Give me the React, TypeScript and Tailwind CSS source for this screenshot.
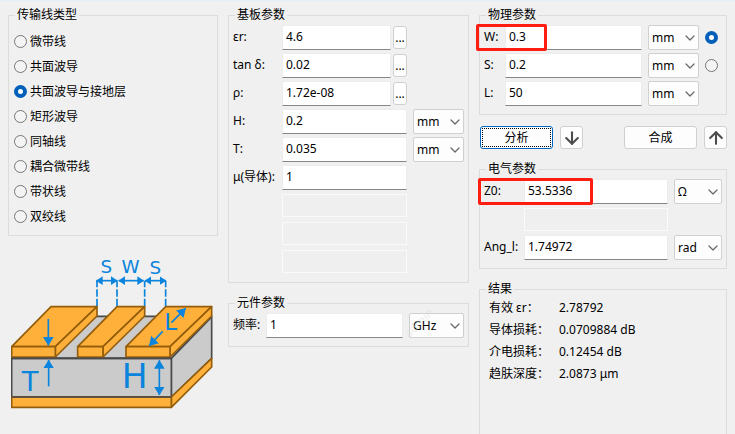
import { ReactNode, useState } from "react";
import { clsx } from "clsx";
import { ArrowDown, ArrowUp, ChevronDown } from "lucide-react";

const LINE_TYPES = [
  "微带线",
  "共面波导",
  "共面波导与接地层",
  "矩形波导",
  "同轴线",
  "耦合微带线",
  "带状线",
  "双绞线",
];

const RESULTS = [
  { label: "有效 εr：", value: "2.78792" },
  { label: "导体损耗：", value: "0.0709884 dB" },
  { label: "介电损耗：", value: "0.12454 dB" },
  { label: "趋肤深度：", value: "2.0873 μm" },
];

const LENGTH_UNITS = ["mm", "cm", "mil", "inch"];

type GroupProps = {
  title: string;
  className?: string;
  bodyClassName?: string;
  children: ReactNode;
};

const Group = ({ title, className, bodyClassName, children }: GroupProps) => (
  <fieldset className={clsx("min-w-0 border border-[#dcdcdc]", className)}>
    <legend className="ml-1.5 px-0.5 leading-4">{title}</legend>
    <div className={bodyClassName}>{children}</div>
  </fieldset>
);

type LabelProps = {
  htmlFor: string;
  children: ReactNode;
};

const Label = ({ htmlFor, children }: LabelProps) => (
  <label htmlFor={htmlFor} className="relative pb-0.5 whitespace-nowrap">
    {children}
  </label>
);

type FieldProps = {
  id: string;
  value?: string;
  disabled?: boolean;
};

const Field = ({ id, value, disabled }: FieldProps) => (
  <input
    id={id}
    type="text"
    defaultValue={value}
    disabled={disabled}
    aria-label={disabled ? "未使用" : undefined}
    className={clsx(
      "w-full min-w-0 border px-[3px] outline-none",
      disabled
        ? "h-[23px] border-[#fafafa] bg-[#efefef]"
        : "h-[25px] border-[#ececec] border-b-[#868686] bg-white pb-0.5"
    )}
  />
);

type UnitProps = {
  label: string;
  options: string[];
};

const Unit = ({ label, options }: UnitProps) => (
  <div className="relative">
    <select
      aria-label={label}
      className="block h-[25px] w-full appearance-none rounded-xs border border-[#d0d0d0] bg-[#fdfdfd] pl-[3px] outline-none"
    >
      {options.map((option) => (
        <option key={option}>{option}</option>
      ))}
    </select>
    <ChevronDown
      size={16}
      strokeWidth={1.8}
      className="pointer-events-none absolute top-[5px] right-px text-[#666]"
    />
  </div>
);

type FieldWithPickerProps = {
  id: string;
  value: string;
};

const FieldWithPicker = ({ id, value }: FieldWithPickerProps) => (
  <div className="flex items-center gap-0.5">
    <Field id={id} value={value} />
    <button
      type="button"
      className="flex h-[23px] w-[14px] shrink-0 items-center justify-center rounded-[3px] border border-[#d0d0d0] bg-[#fdfdfd]"
    >
      ...
    </button>
  </div>
);

type RadioProps = {
  name: string;
  label?: string;
  checked: boolean;
  onChange: () => void;
};

const Radio = ({ name, label, checked, onChange }: RadioProps) => (
  <input
    type="radio"
    name={name}
    aria-label={label}
    checked={checked}
    onChange={onChange}
    className="size-[13px] shrink-0 appearance-none rounded-full border border-[#777] bg-[#f4f4f4] checked:border-4 checked:border-[#005fb8] checked:bg-white"
  />
);

type ActionButtonProps = {
  focused?: boolean;
  children: ReactNode;
};

const ActionButton = ({ focused, children }: ActionButtonProps) => (
  <button
    type="button"
    className={clsx(
      "h-[23px] w-[73px] rounded-[3px] border bg-[#fdfdfd] p-px",
      focused ? "border-[#0067c0]" : "border-[#d0d0d0]"
    )}
  >
    <span
      className={clsx(
        "flex h-full items-center justify-center border border-dotted",
        focused ? "border-black" : "border-transparent"
      )}
    >
      {children}
    </span>
  </button>
);

type ArrowButtonProps = {
  label: string;
  children: ReactNode;
};

const ArrowButton = ({ label, children }: ArrowButtonProps) => (
  <button
    type="button"
    aria-label={label}
    className="flex size-[23px] items-center justify-center rounded-[3px] border border-[#d0d0d0] bg-[#fdfdfd] text-[#4d4d4d]"
  >
    {children}
  </button>
);

// Grounded coplanar waveguide cross-section
const Diagram = () => (
  <svg viewBox="33 15 612 477" className="mt-3.5 w-full px-[3px]">
    <defs>
      <marker
        id="arrow"
        viewBox="0 0 20 26"
        refX="19"
        refY="13"
        markerWidth="20"
        markerHeight="26"
        markerUnits="userSpaceOnUse"
        orient="auto-start-reverse"
      >
        <path d="M0 0 20 13 0 26Z" fill="#0a84dc" />
      </marker>
      <marker
        id="arrow-wide"
        viewBox="0 0 26 32"
        refX="25"
        refY="16"
        markerWidth="26"
        markerHeight="32"
        markerUnits="userSpaceOnUse"
        orient="auto-start-reverse"
      >
        <path d="M0 0 26 16 0 32Z" fill="#0a84dc" />
      </marker>
    </defs>

    <g fill="#cbcbcb" stroke="#4a4a4a" strokeWidth="5" strokeLinejoin="round">
      <path d="M35 340 155 214H635L514 340Z" />
      <path d="M514 340 635 216V340L514 456Z" />
      <path d="M35 340H514V456H35Z" />
    </g>
    <g fill="#ffb03a" stroke="#945d0a" strokeWidth="5" strokeLinejoin="round">
      <path d="M514 456 635 340V366L514 487Z" />
      <path d="M35 456H514V487H35Z" />

      <path d="M35 305 153 185H291L166 305Z" />
      <path d="M166 305 291 185V213L166 336Z" />
      <path d="M35 305H166V336H35Z" />

      <path d="M233 305 351 185H434L309 305Z" />
      <path d="M309 305 434 185V213L309 336Z" />
      <path d="M233 305H309V336H233Z" />

      <path d="M378 305 497 185H635L510 305Z" />
      <path d="M510 305 635 185V213L510 336Z" />
      <path d="M378 305H510V336H378Z" />
    </g>
    <path d="M35 340H514M35 456H514" stroke="#4a4a4a" strokeWidth="5" />

    <g stroke="#0a84dc" strokeWidth="5" fill="none">
      <path
        d="M291 183V107M351 183V107M434 183V107M497 183V107"
        strokeDasharray="22 6"
      />
      <path d="M289 107H352" markerStart="url(#arrow)" markerEnd="url(#arrow)" />
      <path d="M356 107H431" markerStart="url(#arrow)" markerEnd="url(#arrow)" />
      <path d="M435 107H498" markerStart="url(#arrow)" markerEnd="url(#arrow)" />
      <path d="M145 222V301" markerEnd="url(#arrow-wide)" />
      <path d="M146 424V345" markerEnd="url(#arrow-wide)" />
      <path
        d="M478 346V450"
        markerStart="url(#arrow-wide)"
        markerEnd="url(#arrow-wide)"
      />
      <path d="M488 259 448 302" markerEnd="url(#arrow-wide)" />
      <path d="M514 233 557 190" markerEnd="url(#arrow-wide)" />
    </g>
    <g fill="#0a84dc" className="font-['DejaVu_Sans',sans-serif]" textAnchor="middle">
      <text x="319" y="85" fontSize="55">S</text>
      <text x="392" y="85" fontSize="55">W</text>
      <text x="466" y="87" fontSize="55">S</text>
      <text x="512" y="256" fontSize="69">L</text>
      <text x="90" y="437" fontSize="82">T</text>
      <text x="404" y="430" fontSize="103">H</text>
    </g>
  </svg>
);

export default function App() {
  const [lineType, setLineType] = useState("共面波导与接地层");
  const [target, setTarget] = useState("W");

  return (
    <main className="grid min-h-screen grid-cols-[210fr_241fr_248fr] gap-x-2.5 border-t border-[#e3eef8] bg-[#f0f0f0] px-2 pt-1.5 font-['Noto_Sans','Noto_Sans_CJK_SC',sans-serif] text-xs leading-4 text-black">
      <div>
        <Group title="传输线类型" bodyClassName="px-[5px] py-1.5">
          {LINE_TYPES.map((type) => (
            <label key={type} className="flex h-[25px] items-center gap-[3px]">
              <Radio
                name="line-type"
                checked={lineType === type}
                onChange={() => setLineType(type)}
              />
              {type}
            </label>
          ))}
        </Group>
        <Diagram />
      </div>

      <div className="flex flex-col gap-3">
        <Group
          title="基板参数"
          bodyClassName="grid grid-cols-[43px_1fr_51px] items-center gap-x-1.5 gap-y-[3px] px-1 pt-0.5 pb-2"
        >
          <Label htmlFor="er">εr:</Label>
          <FieldWithPicker id="er" value="4.6" />
          <span />
          <Label htmlFor="tand">tan δ:</Label>
          <FieldWithPicker id="tand" value="0.02" />
          <span />
          <Label htmlFor="rho">ρ:</Label>
          <FieldWithPicker id="rho" value="1.72e-08" />
          <span />
          <Label htmlFor="h">H:</Label>
          <Field id="h" value="0.2" />
          <Unit label="H 单位" options={LENGTH_UNITS} />
          <Label htmlFor="t">T:</Label>
          <Field id="t" value="0.035" />
          <Unit label="T 单位" options={LENGTH_UNITS} />
          <Label htmlFor="mu">μ(导体):</Label>
          <Field id="mu" value="1" />
          {["extra-1", "extra-2", "extra-3"].map((id) => (
            <div key={id} className="col-start-2 flex h-[25px] items-center">
              <Field id={id} disabled />
            </div>
          ))}
        </Group>

        <Group
          title="元件参数"
          bodyClassName="grid grid-cols-[27px_1fr_55px] items-center gap-x-1.5 px-1 pt-0.5 pb-2"
        >
          <Label htmlFor="freq">频率:</Label>
          <Field id="freq" value="1" />
          <div className="relative">
            <Unit label="频率单位" options={["GHz", "MHz", "kHz", "Hz"]} />
            <span
              aria-hidden="true"
              className="pointer-events-none absolute top-0.5 -left-2 -rotate-45 text-[#dcdcdc]/50"
            >
              admin
            </span>
          </div>
        </Group>
      </div>

      <div className="flex flex-col">
        <Group
          title="物理参数"
          bodyClassName="grid grid-cols-[15px_1fr_51px_13px] items-center gap-x-1.5 gap-y-[3px] pt-0.5 pr-2 pb-2 pl-1"
        >
          <Label htmlFor="w">
            W:
            <span className="pointer-events-none absolute -top-[5px] -left-2 z-10 h-[27px] w-[71px] rounded-xs border-3 border-[#ff1d12]" />
          </Label>
          <Field id="w" value="0.3" />
          <Unit label="W 单位" options={LENGTH_UNITS} />
          <Radio
            name="target"
            label="求解 W"
            checked={target === "W"}
            onChange={() => setTarget("W")}
          />
          <Label htmlFor="s">S:</Label>
          <Field id="s" value="0.2" />
          <Unit label="S 单位" options={LENGTH_UNITS} />
          <Radio
            name="target"
            label="求解 S"
            checked={target === "S"}
            onChange={() => setTarget("S")}
          />
          <Label htmlFor="l">L:</Label>
          <Field id="l" value="50" />
          <Unit label="L 单位" options={LENGTH_UNITS} />
        </Group>

        <div className="mt-[11px] flex gap-[7px] pl-px">
          <ActionButton focused>分析</ActionButton>
          <ArrowButton label="向下">
            <ArrowDown size={20} strokeWidth={2.5} />
          </ArrowButton>
          <div className="ml-auto">
            <ActionButton>合成</ActionButton>
          </div>
          <ArrowButton label="向上">
            <ArrowUp size={20} strokeWidth={2.5} />
          </ArrowButton>
        </div>

        <Group
          title="电气参数"
          className="mt-3"
          bodyClassName="grid grid-cols-[34px_1fr_48px] items-center gap-x-1.5 gap-y-[3px] px-1 pt-0.5 pb-2"
        >
          <Label htmlFor="z0">
            Z0:
            <span className="pointer-events-none absolute -top-[5px] -left-1.5 z-10 h-[27px] w-[115px] rounded-xs border-3 border-[#ff1d12]" />
          </Label>
          <Field id="z0" value="53.5336" />
          <Unit label="Z0 单位" options={["Ω", "kΩ"]} />
          <div className="col-start-2 flex h-[25px] items-center">
            <Field id="extra-4" disabled />
          </div>
          <span />
          <Label htmlFor="ang">Ang_l:</Label>
          <Field id="ang" value="1.74972" />
          <Unit label="Ang_l 单位" options={["rad", "deg"]} />
        </Group>

        <Group title="结果" className="mt-3 grow border-b-0" bodyClassName="px-[9px]">
          <dl className="grid grid-cols-[70px_1fr] leading-[22px] whitespace-nowrap">
            {RESULTS.map(({ label, value }) => (
              <div key={label} className="contents">
                <dt>{label}</dt>
                <dd>{value}</dd>
              </div>
            ))}
          </dl>
        </Group>
      </div>
    </main>
  );
}
